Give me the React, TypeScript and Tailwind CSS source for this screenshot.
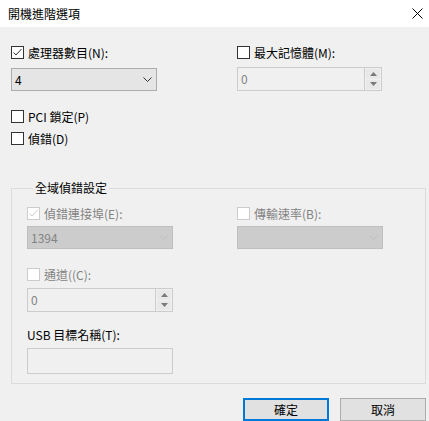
import React from 'react'

const FONT = '"Microsoft JhengHei UI", "Noto Sans CJK TC", "Noto Sans", sans-serif'

function Check({ checked = false, disabled = false }: { checked?: boolean; disabled?: boolean }) {
  return (
    <span
      className={`flex h-[13px] w-[13px] shrink-0 items-center justify-center border ${
        disabled ? 'border-[#cccccc] bg-white' : 'border-[#333333] bg-white'
      }`}
    >
      {checked && (
        <svg width="11" height="11" viewBox="0 0 11 11">
          <path d="M1.5 5.5 L4 8 L9.5 2" fill="none" stroke={disabled ? '#cccccc' : '#333333'} strokeWidth="1" />
        </svg>
      )}
    </span>
  )
}

function CheckRow({ label, checked, disabled }: { label: string; checked?: boolean; disabled?: boolean }) {
  return (
    <label className={`flex h-[13px] items-center gap-[4px] ${disabled ? 'text-[#838383]' : 'text-black'}`}>
      <Check checked={checked} disabled={disabled} />
      <span className="leading-[16px]">{label}</span>
    </label>
  )
}

function Chevron({ color }: { color: string }) {
  return (
    <svg width="9" height="6" viewBox="0 0 9 6">
      <path d="M0.5 0.5 L4.5 4.5 L8.5 0.5" fill="none" stroke={color} strokeWidth="1" />
    </svg>
  )
}

function Combo({ value, disabled = false, width }: { value: string; disabled?: boolean; width: string }) {
  return (
    <div
      className={`flex h-[23px] ${width} items-center justify-between border pl-[3px] pr-[4px] ${
        disabled ? 'border-[#bfbfbf] bg-[#cccccc] text-[#838383]' : 'border-[#adadad] bg-[#e5e5e5] text-black'
      }`}
    >
      <span className="leading-[16px]">{value}</span>
      <Chevron color={disabled ? '#bfbfbf' : '#333333'} />
    </div>
  )
}

function Spin({ value, width }: { value: string; width: string }) {
  return (
    <div className={`flex h-[24px] ${width} border border-[#cccccc] bg-[#f0f0f0]`}>
      <div className="flex flex-1 items-center pl-[3px] leading-[16px] text-[#838383]">{value}</div>
      <div className="flex w-[17px] flex-col gap-[1px] border-l border-[#cccccc] p-[1px]">
        <div className="flex flex-1 items-center justify-center bg-[#e8e8e8]">
          <svg width="7" height="4" viewBox="0 0 7 4">
            <path d="M0 4 L3.5 0 L7 4 Z" fill="#7a7a7a" />
          </svg>
        </div>
        <div className="flex flex-1 items-center justify-center bg-[#e8e8e8]">
          <svg width="7" height="4" viewBox="0 0 7 4">
            <path d="M0 0 L3.5 4 L7 0 Z" fill="#7a7a7a" />
          </svg>
        </div>
      </div>
    </div>
  )
}

export default function App() {
  return (
    <div className="h-[421px] w-[429px] overflow-hidden bg-[#f0f0f0] text-[12px]" style={{ fontFamily: FONT }}>
      {/* title bar */}
      <div className="flex h-[27px] items-center justify-between bg-white pl-[8px] pr-[6px]">
        <span className="leading-[16px] text-black">開機進階選項</span>
        <svg width="11" height="11" viewBox="0 0 11 11">
          <path d="M0.5 0.5 L10.5 10.5 M10.5 0.5 L0.5 10.5" stroke="#000" strokeWidth="1" />
        </svg>
      </div>

      <div className="pl-[11px] pt-[19px]">
        <div className="grid grid-cols-[226px_1fr]">
          <div>
            <CheckRow label="處理器數目(N):" checked />
            <div className="mt-[9px]">
              <Combo value="4" width="w-[146px]" />
            </div>
          </div>
          <div>
            <CheckRow label="最大記憶體(M):" />
            <div className="mt-[8px]">
              <Spin value="0" width="w-[145px]" />
            </div>
          </div>
        </div>

        <div className="mt-[19px]">
          <CheckRow label="PCI 鎖定(P)" />
        </div>
        <div className="mt-[9px]">
          <CheckRow label="偵錯(D)" />
        </div>

        <fieldset className="mt-[35px] w-[415px] border border-[#dcdcdc] pb-[9px] pl-[15px]">
          <legend className="ml-[6px] px-[2px] leading-[16px] text-black">全域偵錯設定</legend>
          <div className="grid grid-cols-[210px_1fr] pt-[11px]">
            <div>
              <CheckRow label="偵錯連接埠(E):" checked disabled />
              <div className="mt-[6px]">
                <Combo value="1394" width="w-[146px]" disabled />
              </div>
            </div>
            <div>
              <CheckRow label="傳輸速率(B):" disabled />
              <div className="mt-[6px]">
                <Combo value="" width="w-[146px]" disabled />
              </div>
            </div>
          </div>
          <div className="mt-[19px]">
            <CheckRow label="通道((C):" disabled />
          </div>
          <div className="mt-[7px]">
            <Spin value="0" width="w-[146px]" />
          </div>
          <div className="mt-[15px] leading-[16px] text-black">USB 目標名稱(T):</div>
          <div className="mt-[5px] h-[26px] w-[146px] border border-[#cccccc] bg-[#f0f0f0]" />
        </fieldset>

        <div className="mt-[14px] flex justify-end gap-[11px] pr-[3px]">
          <button className="h-[23px] w-[86px] border-2 border-[#0078d7] bg-[#e1e1e1] leading-[16px] text-black">確定</button>
          <button className="h-[23px] w-[86px] border border-[#adadad] bg-[#e1e1e1] leading-[16px] text-black">取消</button>
        </div>
      </div>
    </div>
  )
}
